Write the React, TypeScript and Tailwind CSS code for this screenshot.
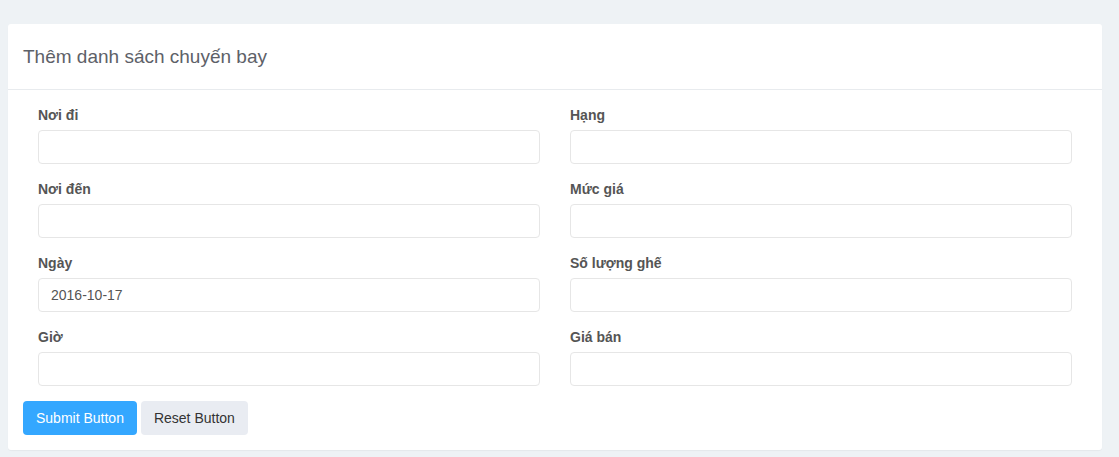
const fields: { left: [string, string]; right: [string, string] }[] = [
  { left: ["Nơi đi", ""], right: ["Hạng", ""] },
  { left: ["Nơi đến", ""], right: ["Mức giá", ""] },
  { left: ["Ngày", "2016-10-17"], right: ["Số lượng ghế", ""] },
  { left: ["Giờ", ""], right: ["Giá bán", ""] },
];

function Field({ label, value }: { label: string; value: string }) {
  return (
    <div className="px-[15px] mb-[15px]">
      <label className="block h-5 leading-5 mb-[5px] text-[14px] font-bold text-[#555]">
        {label}
      </label>
      <input
        type="text"
        defaultValue={value}
        className="block w-full h-[34px] px-3 rounded border border-[#e6e6e6] bg-white text-[14px] text-[#555] outline-none"
      />
    </div>
  );
}

export default function App() {
  return (
    <div
      className="min-h-[457px] bg-[#eef2f5] pl-2 pr-[17px] pt-6 pb-[7px]"
      style={{ fontFamily: '"Liberation Sans", Arial, sans-serif' }}
    >
      <div className="bg-white rounded-[3px] shadow-[0_1px_1px_rgba(0,0,0,0.04)]">
        {/* Header */}
        <div className="h-[66px] px-[15px] flex items-center border-b border-[#e8ebee]">
          <h3 className="text-[19px] text-[#5d6168] pt-[1px]">
            Thêm danh sách chuyến bay
          </h3>
        </div>

        {/* Body */}
        <div className="p-[15px]">
          <div className="grid grid-cols-2">
            {fields.map((row, i) => (
              <div key={i} className="contents">
                <Field label={row.left[0]} value={row.left[1]} />
                <Field label={row.right[0]} value={row.right[1]} />
              </div>
            ))}
          </div>

          <div className="flex gap-1">
            <button className="h-[34px] px-[13px] rounded bg-[#34a7ff] text-white text-[14px]">
              Submit Button
            </button>
            <button className="h-[34px] px-[13px] rounded bg-[#e9ecf2] text-[#333] text-[14px]">
              Reset Button
            </button>
          </div>
        </div>
      </div>
    </div>
  );
}
